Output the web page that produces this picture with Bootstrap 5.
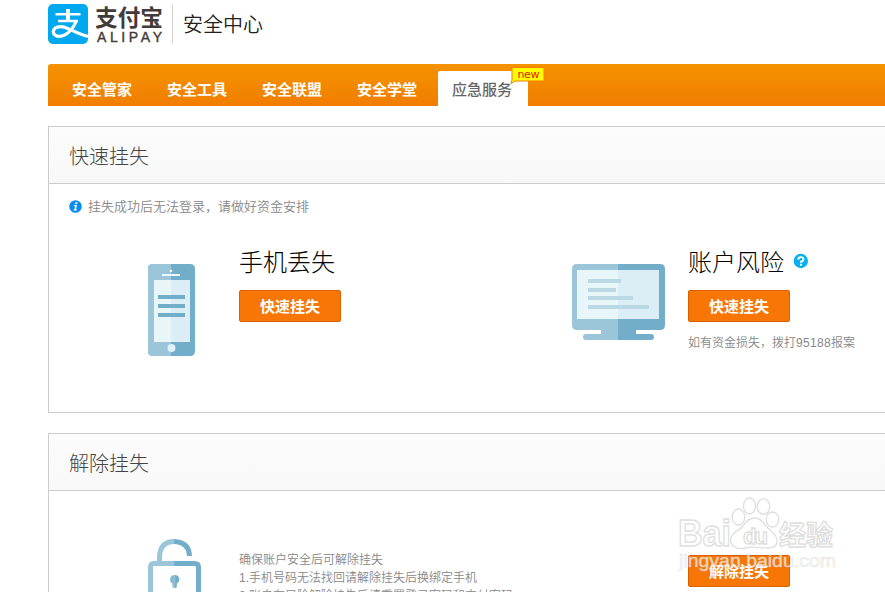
<!DOCTYPE html>
<html lang="zh-CN">
<head>
<meta charset="utf-8">
<meta name="viewport" content="width=device-width, initial-scale=1">
<title>安全中心</title>
<link href="https://cdn.jsdelivr.net/npm/bootstrap@5.3.0/dist/css/bootstrap.min.css" rel="stylesheet">
<style>
body{font-family:"Liberation Sans","Noto Sans CJK SC",sans-serif;font-size:12px;line-height:18px;color:#000;height:592px;background:#fff}
.page-shell{margin-left:48px;height:592px}
.top-bar{height:64px;padding-top:4px}
.brand-name{width:67px}
.brand-line{width:1px;height:40px;background:#d5d5d5;margin:0 10px 0 9px}
.site-title{font-size:20px;line-height:42px;font-weight:350;color:#222}
.main-nav{height:42px;background:linear-gradient(#f59300,#f17d00);border-radius:3px 0 0 0;padding-left:10px}
.main-nav .nav-link{width:95px;height:35px;padding:0 0 0 14px;font-size:15px;line-height:38px;font-weight:700;color:#fff}
.main-nav .nav-link.active{width:90px;background:#fff;color:#666;font-weight:500;border-radius:2px 2px 0 0}
.tag-new{left:72px;top:-5px}
.panel{border:1px solid #ccc;border-right:0}
.panel-one{height:287px;margin-top:20px}
.panel-two{height:200px;margin-top:20px}
.panel-head{height:57px;border-bottom:1px solid #ccc;background:linear-gradient(#fcfcfc,#f8f8f8);padding-left:20px;font-size:20px;line-height:60px;font-weight:300;color:#444}
.tip-line{height:45px;padding-left:20px;font-size:13px;color:#888;font-weight:350}
.entries{padding-top:15px}
.art-a{width:190px;padding-left:99px}
.art-b{width:116px}
.entry-a{width:523px}
.entry-title{font-size:24px;line-height:38px;font-weight:300;margin:0;height:46px}
.btn-go{width:102px;height:32px;padding:0;font-size:15px;line-height:31px;font-weight:700;border-radius:2px;background:#f77605;border:1px solid #db6100;color:#fff}
.btn-go:hover{background:#f88a26;color:#fff}
.hint{color:#888;font-weight:350;white-space:nowrap}
.hotline{letter-spacing:.3px}
.unlock-text{width:449px}
.watermark{left:672px;top:490px;pointer-events:none}
</style>
</head>
<body class="overflow-hidden">
<div class="page-shell overflow-hidden">
  <header class="top-bar d-flex">
    <svg width="40" height="40" viewBox="0 0 40 40">
      <rect width="40" height="40" rx="5" fill="#00a9ef"/>
      <g fill="none" stroke="#fff">
        <path d="M20 5v11" stroke-width="4"/>
        <path d="M7.500 10.300h25M10 17h20" stroke-width="2.600"/>
        <path d="M28.500 16.500C25.500 24 20.500 29.500 15.500 31.500C8.500 34 4.500 30.500 5.500 26.500C7 22 13.500 22 18.500 24C25 26.500 31 30 40 32.500" stroke-width="3.200"/>
      </g>
    </svg>
    <svg class="brand-name ms-2" height="40" viewBox="0 0 67 40" fill="#423b3a">
      <text x="-1" y="22" font-family="Noto Sans CJK SC,sans-serif" font-size="23" font-weight="700" textLength="68" lengthAdjust="spacingAndGlyphs">支付宝</text>
      <text x="1" y="38" font-family="Liberation Sans,sans-serif" font-size="14" stroke="#423b3a" stroke-width=".4" textLength="65">ALIPAY</text>
    </svg>
    <div class="brand-line"></div>
    <div class="site-title">安全中心</div>
  </header>

  <nav class="main-nav nav flex-nowrap align-items-end">
    <a class="nav-link" href="#">安全管家</a>
    <a class="nav-link" href="#">安全工具</a>
    <a class="nav-link" href="#">安全联盟</a>
    <a class="nav-link" href="#">安全学堂</a>
    <a class="nav-link active position-relative" href="#">应急服务
      <svg class="tag-new position-absolute" width="36" height="19" viewBox="0 0 36 19">
        <path d="M3.500 1.500h29q1.500 0 1.500 1.500v10.500q0 1.500-1.500 1.500H5L1 17.500l1-3.500V3q0-1.500 1.500-1.500z" fill="#ff0" stroke="#f47a00"/>
        <text x="7.500" y="11.500" font-family="DejaVu Sans,sans-serif" font-size="11" fill="#e02000" textLength="22">new</text>
      </svg>
    </a>
  </nav>

  <section class="panel panel-one">
    <h2 class="panel-head m-0">快速挂失</h2>
    <div class="tip-line d-flex align-items-center">
      <svg class="me-1" width="15" height="13" viewBox="0 0 15 13"><circle cx="6.500" cy="6.500" r="6.300" fill="#0a8cf5"/><path d="M6.500 2.200h2l-.4 1.700h-2zM5 5h3l-1 4.200h1l-.3 1.200H4.500l.3-1.200h.7l.7-3H4.800z" fill="#fff"/></svg>
      <span>挂失成功后无法登录，请做好资金安排</span>
    </div>
    <div class="entries d-flex">
      <div class="entry-a d-flex">
        <div class="art-a flex-shrink-0 pt-3 mt-1">
          <svg width="47" height="92" viewBox="0 0 47 92">
            <rect width="47" height="92" rx="4.500" fill="#72adca"/>
            <path d="M4.500 0H23v92H4.500Q0 92 0 87.500v-83Q0 0 4.500 0z" fill="#9bc6da"/>
            <path d="M6 16h17v62H6z" fill="#e8f5f9"/><path d="M23 16h19v62H23z" fill="#dceef5"/>
            <path d="M10 31h27v4H10zM10 40h27v4H10zM10 49h27v4H10z" fill="#72adca"/>
            <path d="M14 10h18v2H14z" fill="#edf7fb"/><circle cx="23" cy="7" r="1.200" fill="#fff"/><circle cx="23.500" cy="84" r="4" fill="#dff1f7"/>
          </svg>
        </div>
        <div>
          <h3 class="entry-title">手机丢失</h3>
          <button class="btn btn-go">快速挂失</button>
        </div>
      </div>
      <div class="d-flex">
        <div class="art-b flex-shrink-0 pt-3 mt-1">
          <svg width="93" height="76" viewBox="0 0 93 76">
            <path d="M46 0h42q5 0 5 5v56q0 5-5 5H64v4h15q3 0 3 3t-3 3H46z" fill="#72adca"/>
            <path d="M46 0H5Q0 0 0 5v56q0 5 5 5h24v4H14q-3 0-3 3t3 3h32z" fill="#9bc6da"/>
            <path d="M5 6h41v49H5z" fill="#e8f5f9"/><path d="M46 6h41v49H46z" fill="#dceef5"/>
            <path d="M16 15h33v4H16zM16 24h28v4H16zM16 32h45v4H16zM16 41h61v4H16z" fill="#bbd8e5"/>
          </svg>
        </div>
        <div>
          <h3 class="entry-title d-flex">账户风险
            <svg class="ms-2 mt-2" width="17" height="17" viewBox="0 -2 17 17"><circle cx="8.800" cy="7" r="7.200" fill="#05b0f4"/><path d="M6.300 5.700q0-2.500 2.600-2.500 2.500 0 2.500 2T8.900 7.700v1" fill="none" stroke="#fff" stroke-width="1.800"/><path d="M8 9.700h2v2H8z" fill="#fff"/></svg>
          </h3>
          <button class="btn btn-go">快速挂失</button>
          <div class="hint mt-2 pt-1">如有资金损失，拨打<span class="hotline">95188</span>报案</div>
        </div>
      </div>
    </div>
  </section>

  <section class="panel panel-two">
    <h2 class="panel-head m-0">解除挂失</h2>
    <div class="d-flex pt-5">
      <div class="art-a flex-shrink-0">
        <svg width="53" height="80" viewBox="0 0 53 80" fill="none">
          <path d="M11.500 24v-6Q12 2.500 26.500 2.500" stroke="#9bc6da" stroke-width="5"/>
          <path d="M26 2.500Q41 3 41.500 17" stroke="#72adca" stroke-width="5"/>
          <path d="M26 24.500H6Q2.500 24.500 2.500 28v50H26" stroke="#9bc6da" stroke-width="5"/>
          <path d="M26 24.500h20.500q4 0 4 3.500v50H26" stroke="#72adca" stroke-width="5"/>
          <path d="M26.500 36a4.500 4.500 0 0 0-2 8.500V48q0 1 2 1z" fill="#86b9d1"/><path d="M26.500 36a4.500 4.500 0 0 1 2.300 8.500V48q0 1-2.300 1z" fill="#72adca"/>
        </svg>
      </div>
      <div class="hint unlock-text pt-2 mt-1">确保账户安全后可解除挂失<br>1.手机号码无法找回请解除挂失后换绑定手机<br>2.账户有风险解除挂失后请重置登录密码和支付密码</div>
      <div class="pt-3"><button class="btn btn-go">解除挂失</button></div>
    </div>
  </section>
</div>

<svg class="watermark position-absolute" width="180" height="90" viewBox="0 0 180 90" font-family="Liberation Sans,sans-serif">
  <g fill="#fff" fill-opacity=".75" stroke="#dedede" stroke-width="1.300">
    <text x="6" y="56" font-size="36" font-weight="700" textLength="53" lengthAdjust="spacingAndGlyphs">Bai</text>
    <ellipse cx="66.500" cy="27" rx="6.300" ry="8"/><ellipse cx="77.500" cy="16" rx="6" ry="8"/><ellipse cx="91.500" cy="16.500" rx="6.300" ry="7.800"/><ellipse cx="100.500" cy="29.500" rx="6.300" ry="7.500"/>
    <path d="M83 28c7 0 9 7 15 12 9 7 11 18-3 18-6 0-15-2-21 0-9 2-17-2-15-10 2-7 8-7 12-12 3-5 6-8 12-8z"/>
    <text x="71" y="54" font-size="22" font-weight="700" textLength="25">du</text>
    <text x="107" y="55" font-size="27" font-weight="700" font-family="Noto Sans CJK SC,sans-serif">经验</text>
  </g>
  <text x="7" y="77" font-size="18" fill="#fff" fill-opacity=".7" stroke="#d4d4d4" stroke-opacity=".6" stroke-width=".7" textLength="157" lengthAdjust="spacingAndGlyphs">jingyan.baidu.com</text>
</svg>
<script src="https://cdn.jsdelivr.net/npm/bootstrap@5.3.0/dist/js/bootstrap.bundle.min.js"></script>
</body>
</html>
